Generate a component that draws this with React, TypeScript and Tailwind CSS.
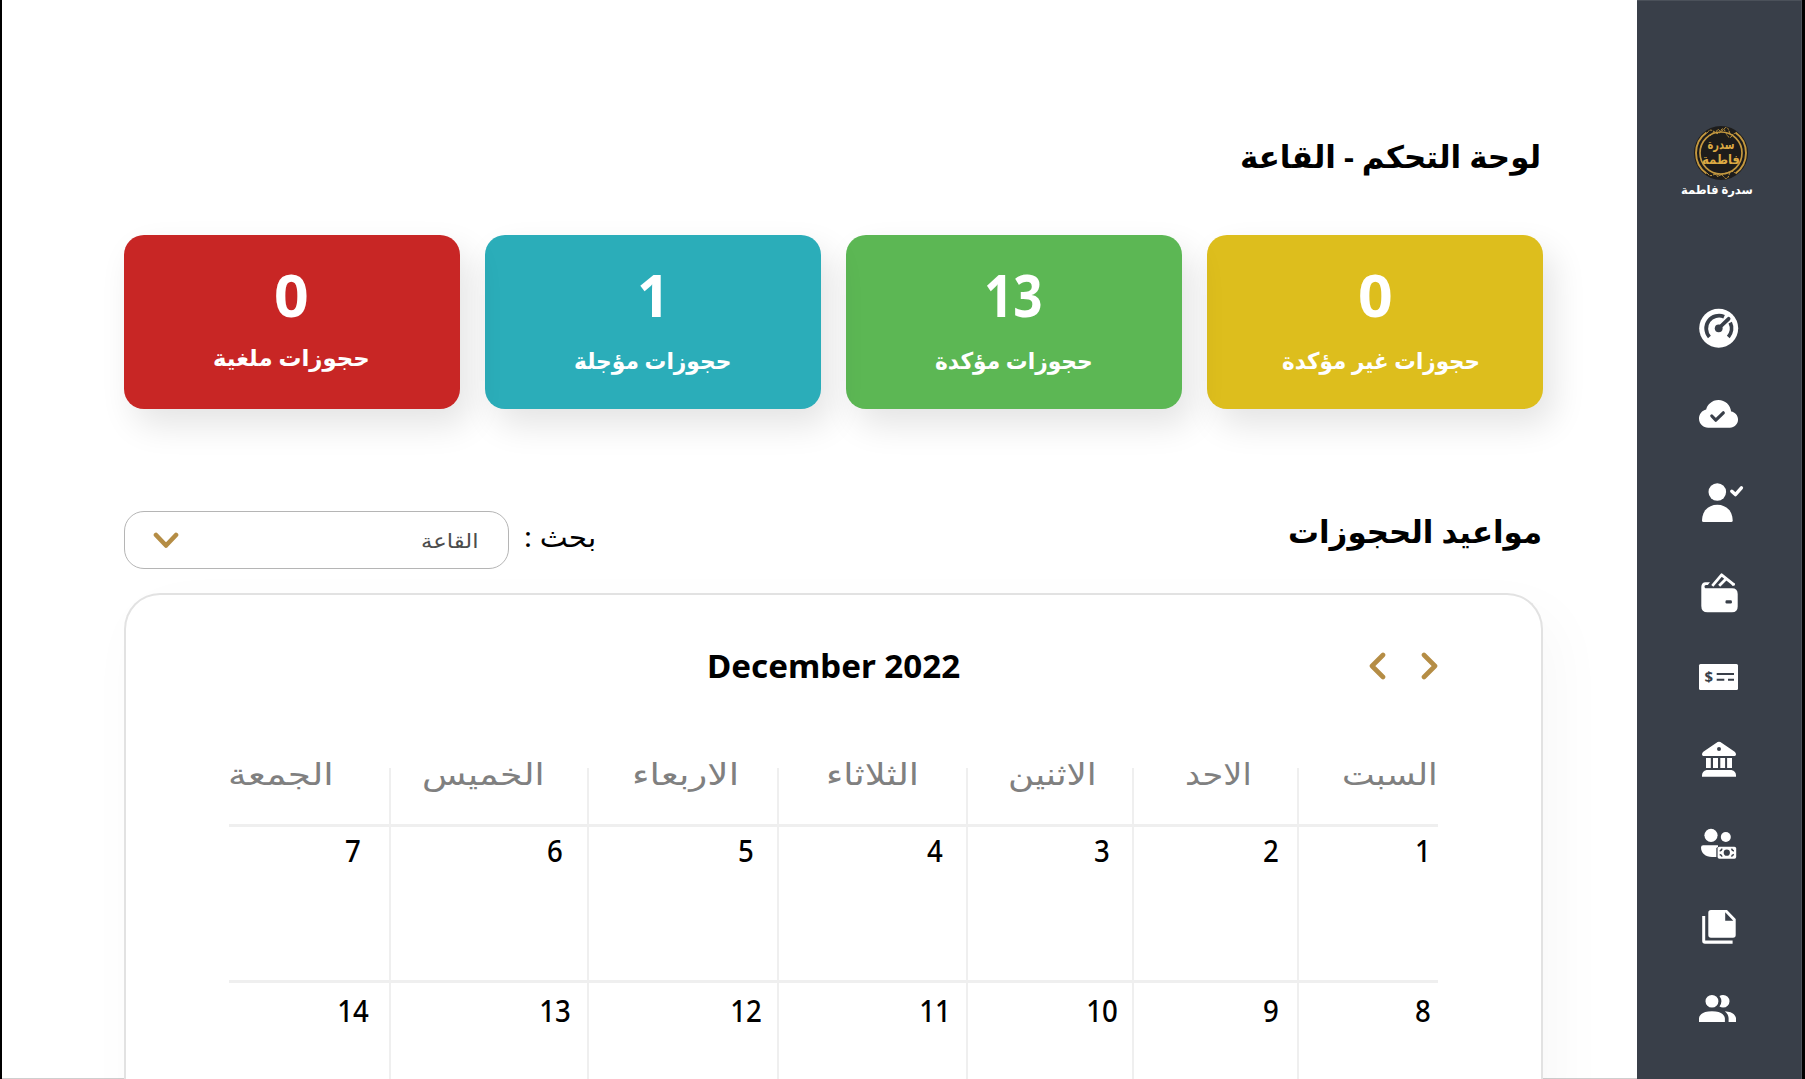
import { useLayoutEffect, useRef, useState } from "react";
import type { ReactNode } from "react";

/* Single line of text condensed or widened to a given width. */
function Fit({ w, className = "", children }: { w: number; className?: string; children: string }) {
  const ref = useRef<HTMLSpanElement>(null);
  const [scale, setScale] = useState(1);
  useLayoutEffect(() => {
    if (ref.current) setScale(w / ref.current.offsetWidth);
  }, [w, children]);
  return (
    <div className={`flex shrink-0 justify-start ${className}`} style={{ width: w }}>
      <span
        ref={ref}
        className="inline-block h-full shrink-0 origin-right whitespace-nowrap"
        style={{ transform: `scaleX(${scale})` }}
      >
        {children}
      </span>
    </div>
  );
}

const DARK = "#393f49";

const navIcons: { gap: string; art: ReactNode }[] = [
  {
    gap: "mt-[104px]",
    art: (
      <>
        <circle cx="23.7" cy="24.3" r="19.5" />
        <g fill="none" stroke={DARK} strokeWidth="3.8">
          <path d="M14.4 32.9A12.8 12.8 0 0 1 29.1 12.7" />
          <path d="M35.2 18.7A12.8 12.8 0 0 1 33.3 32.9" />
          <path d="M24 24L33.6 14.8" strokeLinecap="round" />
        </g>
        <circle cx="23.7" cy="24.3" r="3.9" fill={DARK} />
      </>
    ),
  },
  {
    gap: "mt-[38px]",
    art: (
      <>
        <path
          transform="translate(4 4.96) scale(2.44 2.52)"
          d="M8 2a5.53 5.53 0 0 0-3.594 1.342c-.766.66-1.321 1.52-1.464 2.383C1.266 6.095 0 7.555 0 9.318 0 11.366 1.708 13 3.781 13h8.906C14.502 13 16 11.57 16 9.773c0-1.636-1.242-2.969-2.834-3.194C12.923 3.999 10.69 2 8 2"
        />
        <path d="M16.8 26L20.8 30.2L28.3 22.8" fill="none" stroke={DARK} strokeWidth="3.2" strokeLinecap="round" strokeLinejoin="round" />
      </>
    ),
  },
  {
    gap: "mt-[41px]",
    art: (
      <>
        <circle cx="22.3" cy="13" r="8.8" />
        <path d="M7 41.5C7 32 13.5 25.7 22.3 25.7S37.7 32 37.7 41.5Q37.7 43 36.2 43H8.5Q7 43 7 41.5Z" />
        <path d="M36.8 12.2L40.4 15.6L46.4 8.8" fill="none" stroke="white" strokeWidth="3.4" strokeLinecap="round" strokeLinejoin="round" />
      </>
    ),
  },
  {
    gap: "mt-[42px]",
    art: (
      <>
        <path d="M6.3 18C6.3 15 8 13.3 10.5 13.3H15L12.8 16H11C9 16 9 19.3 11 19.3H37Q42.7 19.3 42.7 25V37.5Q42.7 43.3 37 43.3H12.5Q6.3 43.3 6.3 37Z" />
        <rect x="30.5" y="31.2" width="6.4" height="3.2" rx="1.2" fill={DARK} />
        <g fill="none" stroke="white" strokeWidth="2.8" strokeLinejoin="round">
          <path d="M17.3 16.8L26.6 5.8L38.8 15.6" />
          <path d="M24.2 16.8L31.4 9.4" />
          <path d="M38.2 15.4h.4" strokeLinecap="round" />
        </g>
      </>
    ),
  },
  {
    gap: "mt-[36px]",
    art: (
      <>
        <rect x="4" y="11" width="39" height="26" rx="1.5" />
        <text x="13.9" y="29" textAnchor="middle" fill={DARK} fontSize="15" fontWeight="700" fontFamily="Noto Sans, sans-serif">
          $
        </text>
        <path d="M21.7 21H39M21.7 26.7H29.3M33 26.7H39" stroke={DARK} strokeWidth="2" />
      </>
    ),
  },
  {
    gap: "mt-[35px]",
    art: (
      <>
        <path
          fillRule="evenodd"
          d="M22.6 6.1Q24 5.2 25.4 6.1L39.7 15.8Q41 16.8 41 18.6Q41 20 39.6 20H8.4Q7 20 7 18.6Q7 16.8 8.3 15.8ZM24 11a2 2 0 1 0 0 4a2 2 0 0 0 0-4Z"
        />
        <path d="M11 22h4.8v10H11zM18 22h5v10h-5zM25.3 22h4.8v10h-4.8zM32.1 22H37v10h-4.9z" />
        <path d="M11.5 34H36.5Q41 35 41 39.5V40.8H7V39.5Q7 35 11.5 34Z" />
      </>
    ),
  },
  {
    gap: "mt-[36px]",
    art: (
      <>
        <circle cx="16" cy="15.3" r="6.6" />
        <circle cx="30.8" cy="17" r="5" />
        <path d="M8.2 25.3H23V27L21.3 28V37H17C10.5 37 6 33.3 6 27.6Q6 25.3 8.2 25.3Z" />
        <rect x="22.6" y="26.7" width="18.6" height="12" rx="1.8" />
        <circle cx="31.8" cy="32.7" r="3.1" fill={DARK} />
        <path d="M24.7 31Q26.7 30.6 27 28.7M38.9 31Q36.9 30.6 36.6 28.7M24.7 34.4Q26.7 34.8 27 36.7M38.9 34.4Q36.9 34.8 36.6 36.7" fill="none" stroke={DARK} strokeWidth="1.5" />
      </>
    ),
  },
  {
    gap: "mt-[35px]",
    art: (
      <>
        <path d="M7.2 13H10.2V37.4H37.6V40.7H10Q7.2 40.7 7.2 38Z" />
        <path fillRule="evenodd" d="M16 7H32L40.7 16V32Q40.7 34.8 38 34.8H16Q13.3 34.8 13.3 32V9.7Q13.3 7 16 7ZM30.2 9.2V17.8H38.3Z" />
      </>
    ),
  },
  {
    gap: "mt-[33px]",
    art: (
      <path
        transform="translate(0.3 3.8) scale(1.85 1.8)"
        d="M16 17V19H2V17S2 13 9 13 16 17 16 17M12.5 7.5A3.5 3.5 0 1 0 9 11A3.5 3.5 0 0 0 12.5 7.5M15.94 13A5.32 5.32 0 0 1 18 17V19H22V17S22 13.37 15.94 13M15 4A3.39 3.39 0 0 0 13.07 4.59A5 5 0 0 1 13.07 10.41A3.39 3.39 0 0 0 15 11A3.5 3.5 0 0 0 15 4Z"
      />
    ),
  },
];

function Logo() {
  return (
    <svg viewBox="0 0 56 56" className="size-14">
      <circle cx="28" cy="28" r="27" fill="#1d1c1b" />
      <g fill="none" stroke="#c4983f">
        <circle cx="28" cy="28" r="21" strokeWidth="1.7" />
        <path d="M13.5 7.5A25.3 25.3 0 0 0 13.5 48.5M42.5 7.5A25.3 25.3 0 0 1 42.5 48.5" strokeWidth="1.9" />
        <path
          d="M14 8Q17 3.5 20 6T25 4Q28 8 31 4T36 6T42 8M17 11Q20 6 23 8T28 5.5T33 8T39 11M14 48Q17 52 20 50T25 52Q28 48 31 52T36 50T42 48M18 46Q22 51 28 49.5T38 46"
          strokeWidth="1"
          strokeDasharray="2.5 1"
        />
      </g>
      <g fill="#dba943" fontFamily="DejaVu Sans, sans-serif" fontWeight="700" textAnchor="middle" direction="rtl">
        <text x="28" y="24" fontSize="13" textLength="27" lengthAdjust="spacingAndGlyphs">
          سدرة
        </text>
        <text x="28" y="38.5" fontSize="13" textLength="38" lengthAdjust="spacingAndGlyphs">
          فاطمة
        </text>
      </g>
    </svg>
  );
}

const cards = [
  { value: "0", vw: 35, vpos: "", label: "حجوزات غير مؤكدة", lw: 198, bg: "bg-[#ddbe1d]", pos: "mt-[20px] ml-[12px]" },
  { value: "13", vw: 59, vpos: "mr-[3px]", label: "حجوزات مؤكدة", lw: 158, bg: "bg-[#5cb754]", pos: "mt-[20px]" },
  { value: "1", vw: 33, vpos: "", label: "حجوزات مؤجلة", lw: 157, bg: "bg-[#2badb9]", pos: "mt-[20px]" },
  { value: "0", vw: 35, vpos: "mr-[1px]", label: "حجوزات ملغية", lw: 157, bg: "bg-[#c82625]", pos: "mt-[17px] mr-[2px]" },
];

const days = [
  { name: "السبت", w: 96, pad: "", num: "-mr-[5px]" },
  { name: "الاحد", w: 67, pad: "pr-[45px]", num: "mr-[6px]" },
  { name: "الاثنين", w: 89, pad: "pr-[35px]", num: "mr-[10px]" },
  { name: "الثلاثاء", w: 93, pad: "pr-[47px]", num: "mr-[11px]" },
  { name: "الاربعاء", w: 107, pad: "pr-[38px]", num: "mr-[11px]" },
  { name: "الخميس", w: 122, pad: "pr-[43px]", num: "mr-[12px]" },
  { name: "الجمعة", w: 106, pad: "pr-[55px]", num: "mr-[16px]" },
];

const COLS = "grid shrink-0 grid-cols-[141px_165px_166px_189px_190px_198px_160px]";

function Chevron({ d, className }: { d: string; className: string }) {
  return (
    <svg className={className} fill="none" stroke="#b58d45" strokeWidth="4.6" strokeLinecap="round" strokeLinejoin="round">
      <path d={d} />
    </svg>
  );
}

export default function App() {
  return (
    <div
      dir="rtl"
      className="flex h-[1079px] w-[1805px] overflow-hidden border-r-3 border-l-2 border-black bg-white font-['Noto_Sans','DejaVu_Sans',sans-serif] text-black"
    >
      <aside className="flex w-[165px] shrink-0 flex-col items-center border-t border-r border-t-[#4b515a] border-r-[#4b515a] bg-[#393f49]">
        <div className="mt-[124px] ml-[3px]">
          <Logo />
        </div>
        <Fit w={72} className="mt-[-1px] mr-[5px] h-5 text-[12px] leading-5 font-bold text-white">
          سدرة فاطمة
        </Fit>
        <nav className="flex flex-col items-center">
          {navIcons.map((icon, i) => (
            <button key={i} className={`block size-12 ${icon.gap}`}>
              <svg viewBox="0 0 48 48" fill="white" className="size-12 overflow-visible">
                {icon.art}
              </svg>
            </button>
          ))}
        </nav>
      </aside>

      <main className="relative flex h-full w-[1635px] shrink-0 flex-col pr-[94px] pl-[122px]">
        <div className="absolute inset-x-0 bottom-0 h-px bg-[#cfcfcf]" />

        <Fit w={301} className="mt-[136px] mr-[2px] h-10 text-[31px] leading-10 font-bold">
          لوحة التحكم - القاعة
        </Fit>

        <section className="mt-[59px] grid grid-cols-4 gap-[25px]">
          {cards.map((c) => (
            <div
              key={c.label}
              className={`flex h-[174px] flex-col items-center rounded-[20px] pt-[29px] text-white shadow-[10px_16px_34px_rgba(0,0,0,0.11)] ${c.bg}`}
            >
              <div className={c.vpos}>
                <Fit w={c.vw} className="h-[60px] text-[59px] leading-[60px] font-bold">
                  {c.value}
                </Fit>
              </div>
              <div className={c.pos}>
                <Fit w={c.lw} className="h-8 text-[23px] leading-8 font-bold">
                  {c.label}
                </Fit>
              </div>
            </div>
          ))}
        </section>

        <section className="mt-[102px] flex h-[58px] items-start">
          <Fit w={254} className="mr-[1px] h-10 text-[31px] leading-10 font-bold">
            مواعيد الحجوزات
          </Fit>
          <Fit w={72} className="mt-[5px] mr-auto h-10 text-[28px] leading-10">
            بحث :
          </Fit>
          <button className="mr-[15px] flex h-[58px] w-[385px] items-center justify-between rounded-[20px] border border-[#b5b5b5] pr-[29px] pl-[28px]">
            <Fit w={58} className="h-14 pt-px text-[20px] leading-14 text-[#4d4d4d]">
              القاعة
            </Fit>
            <Chevron className="mt-px h-[18px] w-[26px]" d="M3 3L13 13.5L23 3" />
          </button>
        </section>

        <section className="relative mt-6 flex h-[520px] shrink-0 flex-col rounded-t-[36px] border-2 border-b-0 border-[#e2e2e2] bg-white px-[103px] shadow-[14px_20px_60px_rgba(0,0,0,0.03)]">
          <header className="mt-[51px] grid shrink-0 grid-cols-[1fr_auto_1fr] items-center">
            <div className="-mt-px flex gap-[35px]">
              <Chevron className="h-[30px] w-[17px]" d="M3 4L14 15L3 26" />
              <Chevron className="h-[30px] w-[17px]" d="M14 4L3 15L14 26" />
            </div>
            <Fit w={253} className="h-10 text-[33px] leading-10 font-bold">
              December 2022
            </Fit>
            <div />
          </header>

          <div className={`mt-[82px] h-14 ${COLS}`}>
            {days.map((d) => (
              <div key={d.name} className={`border-l-2 border-[#efefef] last:border-l-0 ${d.pad}`}>
                <Fit w={d.w} className="-mt-[14px] h-10 text-[30px] leading-10 text-[#808080]">
                  {d.name}
                </Fit>
              </div>
            ))}
          </div>

          {[0, 1].map((week) => (
            <div key={week} className={`h-[156px] ${COLS}`}>
              {days.map((d, i) => (
                <div key={d.name} className="border-t-3 border-l-2 border-[#efefef] last:border-l-0">
                  <div
                    className={`h-10 w-10 scale-x-[0.92] text-center text-[30px] leading-10 font-medium ${week ? "mt-[8px]" : "mt-[4px]"} ${d.num}`}
                  >
                    {week * 7 + i + 1}
                  </div>
                </div>
              ))}
            </div>
          ))}
        </section>
      </main>
    </div>
  );
}
